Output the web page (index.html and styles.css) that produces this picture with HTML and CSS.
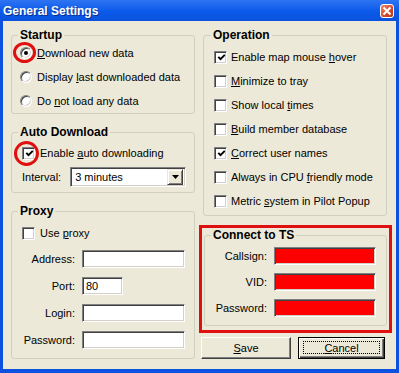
FILE: index.html
```html
<!DOCTYPE html>
<html lang="en">
<head>
    <meta charset="UTF-8">
    <title>General Settings</title>
    <link rel="stylesheet" href="styles.css">
</head>
<body>
 <div class="window">
    <div class="titlebar">
        <span class="title">General Settings</span>
        <span class="close-btn">
            <svg width="10" height="10" viewBox="0 0 10 10"><path d="M1.5 1.5 L8.5 8.5 M8.5 1.5 L1.5 8.5" stroke="#fff" stroke-width="2"/></svg>
        </span>
    </div>

    <div class="content">
        <div class="col">
            <fieldset class="group startup">
                <legend>Startup</legend>
                <div class="opt"><span class="radio checked"></span><span><u>D</u>ownload new data</span></div>
                <div class="opt"><span class="radio"></span><span>Display <u>l</u>ast downloaded data</span></div>
                <div class="opt"><span class="radio"></span><span>Do <u>n</u>ot load any data</span></div>
            </fieldset>

            <fieldset class="group autodl">
                <legend>Auto Download</legend>
                <div class="opt"><span class="check checked"><svg width="9" height="9" viewBox="0 0 9 9"><path d="M1.3 3.8 L3.5 6.2 L7.8 1.8" fill="none" stroke="#000" stroke-width="1.9"/></svg></span><span>Enable <u>a</u>uto downloading</span></div>
                <div class="interval-row">
                    <span>Interval:</span>
                    <div class="combo">
                        <span class="combo-text">3 minutes</span>
                        <span class="combo-btn"><svg width="7" height="4" viewBox="0 0 7 4"><path d="M0 0 H7 L3.5 4 Z" fill="#000"/></svg></span>
                    </div>
                </div>
            </fieldset>

            <fieldset class="group proxy">
                <legend>Proxy</legend>
                <div class="opt"><span class="check"></span><span>Use <u>p</u>roxy</span></div>
                <div class="form-grid">
                    <span class="lbl">Address:</span><span class="field"></span>
                    <span class="lbl">Port:</span><span class="field short">80</span>
                    <span class="lbl">Login:</span><span class="field"></span>
                    <span class="lbl">Password:</span><span class="field"></span>
                </div>
            </fieldset>
        </div>

        <div class="col">
            <fieldset class="group operation">
                <legend>Operation</legend>
                <div class="opt"><span class="check checked"><svg width="9" height="9" viewBox="0 0 9 9"><path d="M1.3 3.8 L3.5 6.2 L7.8 1.8" fill="none" stroke="#000" stroke-width="1.9"/></svg></span><span>Enable map mouse <u>h</u>over</span></div>
                <div class="opt"><span class="check"></span><span><u>M</u>inimize to tray</span></div>
                <div class="opt"><span class="check"></span><span>Show local <u>t</u>imes</span></div>
                <div class="opt"><span class="check"></span><span><u>B</u>uild member database</span></div>
                <div class="opt"><span class="check checked"><svg width="9" height="9" viewBox="0 0 9 9"><path d="M1.3 3.8 L3.5 6.2 L7.8 1.8" fill="none" stroke="#000" stroke-width="1.9"/></svg></span><span><u>C</u>orrect user names</span></div>
                <div class="opt"><span class="check"></span><span>Always in CPU <u>f</u>riendly mode</span></div>
                <div class="opt"><span class="check"></span><span>Metric <u>s</u>ystem in Pilot Popup</span></div>
            </fieldset>

            <div class="highlight">
                <fieldset class="group connect">
                    <legend>Connect to TS</legend>
                    <div class="form-grid ts">
                        <span class="lbl">Callsign:</span><span class="field red"></span>
                        <span class="lbl">VID:</span><span class="field red"></span>
                        <span class="lbl">Password:</span><span class="field red"></span>
                    </div>
                </fieldset>
            </div>

            <div class="buttons">
                <button class="btn save"><u>S</u>ave</button>
                <button class="btn cancel"><u>C</u>ancel</button>
            </div>
        </div>
    </div>

    <span class="mark mark-radio"></span>
    <span class="mark mark-check"></span>
 </div>
</body>
</html>
```

FILE: styles.css
```css
body {
    margin: 0;
    font-family: "Liberation Sans", Arial, sans-serif;
    font-size: 11px;
    color: #000;
}

.window {
    position: relative;
    width: 399px;
    height: 373px;
    box-sizing: border-box;
    background-color: #0c51e0;
    display: flex;
    flex-direction: column;
}

.titlebar {
    height: 21px;
    display: flex;
    align-items: center;
    justify-content: space-between;
    background: linear-gradient(#2e74f2, #0b5aea 55%, #0a52dc);
}

.title {
    padding-left: 3px;
    color: #fff;
    font-weight: bold;
    font-size: 12px;
    text-shadow: 1px 1px 0 #0a2e8c;
}

.close-btn {
    width: 12px;
    height: 12px;
    margin-right: 5px;
    margin-top: 1px;
    border: 1px solid #fff;
    border-radius: 3px;
    background: linear-gradient(135deg, #f0896c, #d2492a 60%, #b83418);
    display: flex;
    align-items: center;
    justify-content: center;
}

.content {
    flex: 1;
    margin: 0 3px 4px 3px;
    background-color: #ece9d8;
    padding: 8px 0 0 8px;
    display: grid;
    grid-template-columns: 184px 184px;
    column-gap: 8px;
    align-items: start;
}

.col {
    display: flex;
    flex-direction: column;
}

.group {
    margin: 0;
    min-width: 0;
    border: 1px solid #d0d0bf;
    border-radius: 3px;
    padding: 0 8px;
}

.group legend {
    font-weight: bold;
    font-size: 12px;
    line-height: 12px;
    padding: 0 2px;
    margin-left: -2px;
}

.opt {
    height: 24px;
    display: flex;
    align-items: center;
    white-space: nowrap;
}

.startup .opt:first-of-type {
    margin-top: 0;
}

.autodl {
    margin-top: 12px;
    padding-top: 3px;
    padding-bottom: 3px;
}

.proxy {
    margin-top: 12px;
    padding-top: 4px;
    padding-bottom: 5px;
}

.operation {
    padding-top: 4px;
    padding-bottom: 2px;
}

.operation legend {
    margin-left: -1px;
}

/* radio buttons */
.radio {
    width: 12px;
    height: 12px;
    box-sizing: border-box;
    border-radius: 50%;
    border: 1px solid;
    border-color: #808080 #fff #fff #808080;
    background-color: #fff;
    box-shadow: inset 1px 1px 0 #404040, inset -1px -1px 0 #d4d0c8;
    margin-right: 5px;
    display: flex;
    align-items: center;
    justify-content: center;
    transform: rotate(0deg);
}

.radio.checked::after {
    content: "";
    width: 4px;
    height: 4px;
    border-radius: 50%;
    background-color: #000;
}

/* check boxes */
.check {
    width: 13px;
    height: 13px;
    box-sizing: border-box;
    border: 1px solid;
    border-color: #808080 #fff #fff #808080;
    background-color: #fff;
    box-shadow: inset 1px 1px 0 #404040, inset -1px -1px 0 #d4d0c8;
    margin-left: 2px;
    margin-right: 4px;
    display: flex;
    align-items: center;
    justify-content: center;
}

.check svg {
    margin: 1px 0 0 1px;
}

.autodl .check,
.proxy .check {
    margin-right: 5px;
}

.interval-row {
    height: 24px;
    display: flex;
    align-items: center;
    padding-left: 2px;
    gap: 9px;
}

.combo {
    width: 119px;
    height: 20px;
    box-sizing: border-box;
    border: 1px solid;
    border-color: #808080 #fff #fff #808080;
    box-shadow: inset 1px 1px 0 #404040, inset -1px -1px 0 #d4d0c8;
    background-color: #fff;
    display: flex;
    align-items: center;
    justify-content: space-between;
    padding: 2px;
}

.combo-text {
    padding-left: 2px;
}

.combo-btn {
    width: 16px;
    height: 16px;
    box-sizing: border-box;
    background-color: #ece9d8;
    border: 1px solid;
    border-color: #ece9d8 #404040 #404040 #ece9d8;
    box-shadow: inset 1px 1px 0 #fff, inset -1px -1px 0 #808080;
    display: flex;
    align-items: center;
    justify-content: center;
}

/* label + field grids */
.form-grid {
    display: grid;
    grid-template-columns: 55px 103px;
    grid-auto-rows: 27px;
    column-gap: 7px;
    align-items: center;
}

.form-grid.ts {
    grid-template-columns: 54px 102px;
    grid-auto-rows: 26px;
}

.lbl {
    text-align: right;
}

.field {
    height: 18px;
    box-sizing: border-box;
    border: 1px solid;
    border-color: #808080 #fff #fff #808080;
    box-shadow: inset 1px 1px 0 #404040, inset -1px -1px 0 #d4d0c8;
    background-color: #fff;
    padding: 2px 0 0 3px;
    line-height: 13px;
}

.field.short {
    width: 41px;
}

.field.red {
    background-color: #ff0000;
}

/* red highlight from the screenshot */
.highlight {
    margin: 9px -5px 0 -4px;
    border: 3px solid #e01010;
    padding: 1px 2px 4px 2px;
}

.connect {
    padding-top: 2px;
    padding-bottom: 4px;
}

.buttons {
    margin: 4px 0 0 -2px;
    display: flex;
    gap: 7px;
}

.btn {
    position: relative;
    height: 22px;
    box-sizing: border-box;
    font-family: "Liberation Sans", Arial, sans-serif;
    font-size: 11px;
    color: #000;
    background-color: #ece9d8;
    border: 1px solid;
    border-color: #fff #404040 #404040 #fff;
    box-shadow: inset -1px -1px 0 #808080;
    padding: 0;
}

.save {
    width: 90px;
}

.cancel {
    width: 87px;
    border: 1px solid #000;
    box-shadow: inset 1px 1px 0 #fff, inset -1px -1px 0 #404040, inset -2px -2px 0 #808080;
}

.cancel::after {
    content: "";
    position: absolute;
    top: 3px;
    left: 4px;
    right: 4px;
    bottom: 4px;
    border: 1px dotted #000;
}

/* hand-drawn circles */
.mark {
    position: absolute;
    border: 3px solid #e01010;
    border-radius: 50%;
    box-sizing: border-box;
}

.mark-radio {
    left: 13px;
    top: 42px;
    width: 23px;
    height: 21px;
}

.mark-check {
    left: 14px;
    top: 141px;
    width: 25px;
    height: 25px;
}
```
